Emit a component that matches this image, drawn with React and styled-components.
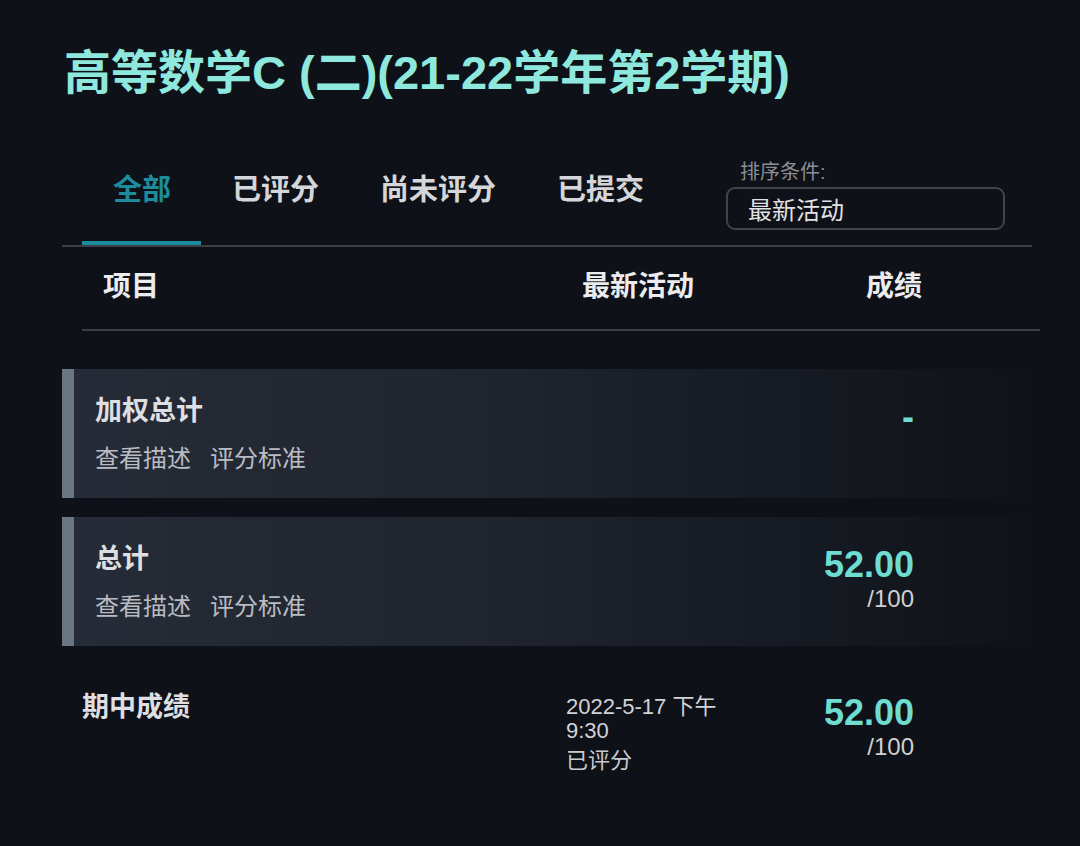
import React, { useState } from 'react'
import styled, { createGlobalStyle } from 'styled-components'

const GlobalStyle = createGlobalStyle`
    html, body {
        margin: 0;
        padding: 0;
        background: #0e1117;
    }
    body {
        font-family: "Liberation Sans", "Noto Sans CJK SC", sans-serif;
        color: #e6e6e8;
    }
`

const Page = styled.div`
    width: 1080px;
    min-height: 846px;
    box-sizing: border-box;
    padding: 45px 48px 40px 62px;
    background: #0e1117;
`

const Title = styled.h1`
    margin: 0 0 0 2px;
    font-size: 47px;
    line-height: 56px;
    font-weight: 700;
    color: #8fe8dd;
    white-space: nowrap;
`

const TabBar = styled.div`
    display: flex;
    align-items: flex-start;
    margin-top: 49px;
    padding-left: 20px;
    border-bottom: 2px solid #393d46;
`

const Tab = styled.button`
    background: none;
    border: none;
    padding: 22px 30px 33px 31px;
    border-bottom: 4px solid ${p => (p.$active ? '#1a8a9c' : 'transparent')};
    font-family: inherit;
    font-size: 29px;
    line-height: 36px;
    font-weight: 700;
    color: ${p => (p.$active ? '#1d8c9d' : '#d5d6d9')};
    cursor: pointer;
`

const SortGroup = styled.div`
    display: flex;
    flex-direction: column;
    margin: 10px 0 0 52px;
`

const SortLabel = styled.span`
    font-size: 20px;
    line-height: 24px;
    color: #8a8d94;
    padding-left: 14px;
`

const SortSelect = styled.div`
    margin-top: 3px;
    width: 279px;
    height: 43px;
    box-sizing: border-box;
    border: 2px solid #3f444d;
    border-radius: 9px;
    padding-left: 20px;
    display: flex;
    align-items: center;
    font-size: 24px;
    color: #e2e2e4;
`

const HeaderRow = styled.div`
    display: grid;
    grid-template-columns: 1fr 284px 56px;
    margin: 0 -8px 0 20px;
    padding: 22px 118px 24px 21px;
    border-bottom: 2px solid #393d46;
    font-size: 28px;
    line-height: 36px;
    font-weight: 700;
    color: #ececee;
`

const List = styled.div`
    display: flex;
    flex-direction: column;
    gap: 19px;
    margin-top: 38px;
`

const GradeRow = styled.div`
    display: grid;
    grid-template-columns: 1fr 160px 188px;
    padding: 25px 118px 24px ${p => (p.$card ? '21px' : '20px')};
    ${p => p.$card && `
        border-left: 12px solid #6a7684;
        background: linear-gradient(90deg, #262c37 0%, #1f242d 45%, #161a22 75%, #0f1218 100%);
    `}
`

const ItemName = styled.div`
    font-size: 27px;
    line-height: 34px;
    font-weight: 700;
    color: #dedfe2;
`

const Links = styled.div`
    display: flex;
    gap: 19px;
    margin-top: 16px;
    font-size: 24px;
    line-height: 30px;
    color: #b9bcc2;
`

const Activity = styled.div`
    margin-top: 5px;
    font-size: 22px;
    line-height: 24px;
    color: #d2d3d6;
`

const Status = styled.div`
    margin-top: 5px;
    font-size: 22px;
    line-height: 26px;
    color: #c9cacd;
`

const Grade = styled.div`
    display: flex;
    flex-direction: column;
    align-items: flex-end;
`

const Score = styled.div`
    margin-top: 2px;
    font-size: 36px;
    line-height: 42px;
    font-weight: 700;
    color: #6fdcd2;
`

const OutOf = styled.div`
    font-size: 24px;
    line-height: 26px;
    color: #cfd0d3;
`

const tabs = ['全部', '已评分', '尚未评分', '已提交']

const rows = [
    { name: '加权总计', card: true, score: '-' },
    { name: '总计', card: true, score: '52.00', total: '/100' },
    { name: '期中成绩', date: '2022-5-17 下午 9:30', status: '已评分', score: '52.00', total: '/100' },
]

export default function App() {
    const [active, setActive] = useState(0)

    return (
        <Page>
            <GlobalStyle />
            <Title>高等数学C (二)(21-22学年第2学期)</Title>
            <TabBar>
                {tabs.map((t, i) => (
                    <Tab key={t} $active={i === active} onClick={() => setActive(i)}>{t}</Tab>
                ))}
                <SortGroup>
                    <SortLabel>排序条件:</SortLabel>
                    <SortSelect>最新活动</SortSelect>
                </SortGroup>
            </TabBar>
            <HeaderRow>
                <span>项目</span>
                <span>最新活动</span>
                <span>成绩</span>
            </HeaderRow>
            <List>
                {rows.map(r => (
                    <GradeRow key={r.name} $card={r.card}>
                        <div>
                            <ItemName>{r.name}</ItemName>
                            {r.card && (
                                <Links>
                                    <span>查看描述</span>
                                    <span>评分标准</span>
                                </Links>
                            )}
                        </div>
                        <div>
                            {r.date && <Activity>{r.date}</Activity>}
                            {r.status && <Status>{r.status}</Status>}
                        </div>
                        <Grade>
                            <Score>{r.score}</Score>
                            {r.total && <OutOf>{r.total}</OutOf>}
                        </Grade>
                    </GradeRow>
                ))}
            </List>
        </Page>
    )
}
